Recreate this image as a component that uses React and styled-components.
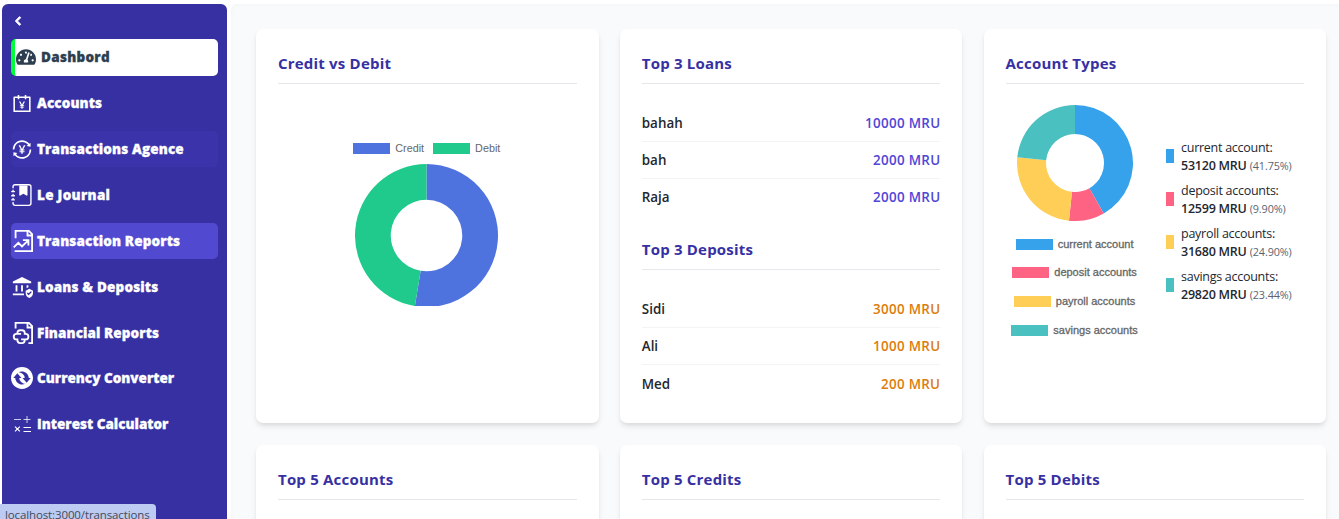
import React from "react";
import styled, { createGlobalStyle } from "styled-components";
import { FaTachometerAlt, FaChevronLeft } from "react-icons/fa";
import { AiOutlineAccountBook, AiOutlineTransaction } from "react-icons/ai";
import { BsJournalBookmarkFill } from "react-icons/bs";
import { GrDocumentPerformance, GrDocumentCloud } from "react-icons/gr";
import { SiConvertio } from "react-icons/si";

const GlobalStyle = createGlobalStyle`
  * { box-sizing: border-box; }
  body {
    margin: 0;
    height: 519px;
    overflow: hidden;
    background: #fff;
    color: #23272f;
    font-family: "Open Sans", "Noto Sans", sans-serif;
  }
`;

const Page = styled.div`
  display: flex;
  gap: 4px;
  height: 519px;
  padding: 4px 0 0 2px;
  overflow: hidden;
`;

const Sidebar = styled.aside`
  width: 225px;
  flex: none;
  padding: 12px 9px 0;
  border-radius: 6px 6px 0 0;
  background: #3730a3;
`;

const Collapse = styled.button`
  display: flex;
  align-items: center;
  height: 10px;
  margin: 0 0 13px;
  padding: 0 0 0 2px;
  border: 0;
  background: none;
  color: #fff;
  font-size: 10px;

  path { stroke: currentColor; stroke-width: 50px; }
`;

const Nav = styled.nav`
  display: flex;
  flex-direction: column;
  gap: 9.2px;
`;

const backgrounds = { active: "#fff", fading: "#3b33aa", hover: "#5249d1" };

const NavItem = styled.a`
  display: flex;
  align-items: center;
  gap: ${(p) => (p.$state === "active" ? 5 : 4)}px;
  height: 36.7px;
  padding-left: ${(p) => (p.$state === "active" ? 1 : 0)}px;
  border-left: ${(p) => (p.$state === "active" ? "4px solid #00ff38" : "0")};
  border-radius: 5px;
  background: ${(p) => backgrounds[p.$state] || "transparent"};
  color: ${(p) => (p.$state === "active" ? "#2c3e50" : "#fff")};
`;

const NavIcon = styled.span`
  display: flex;
  align-items: center;
  justify-content: center;
  flex: none;
  width: ${(p) => (p.$narrow ? 20 : 22)}px;
  font-size: ${(p) => p.$size}px;

  .gr path { stroke: currentColor; }
`;

const NavLabel = styled.span`
  font-size: 13.5px;
  font-weight: 800;
  line-height: 20px;
  letter-spacing: ${(p) => p.$spacing || 0}px;
  white-space: nowrap;
  -webkit-text-stroke: 0.3px currentColor;
`;

const Main = styled.main`
  flex: 1;
  min-width: 0;
  height: 600px;
  padding: 25px 13px 0 25px;
  border-radius: 6px 0 0 0;
  background: #f9fafc;
  box-shadow: inset 2px 2px 3px rgba(0, 0, 0, 0.015);
`;

const Grid = styled.div`
  display: grid;
  grid-template-columns: repeat(3, 342.6px);
  grid-template-rows: 394px 394px;
  gap: 22.4px 21.2px;
`;

const Card = styled.section`
  padding: 23px 22px 0;
  border-radius: 7px;
  background: #fff;
  box-shadow: 0 4px 6px -1px rgba(0, 0, 0, 0.1), 0 2px 4px -1px rgba(0, 0, 0, 0.06);
`;

const Title = styled.h2`
  height: 32px;
  margin: ${(p) => p.$top || 0}px 0 0;
  border-bottom: 1px solid #e5e7eb;
  color: #3730a3;
  font-size: 15px;
  font-weight: 700;
  line-height: 22px;
  letter-spacing: 0.2px;
`;

const List = styled.ul`
  margin: 21px 0 0;
  padding: 0;
  list-style: none;
`;

const Row = styled.li`
  display: flex;
  align-items: center;
  justify-content: space-between;
  height: 36.9px;
  border-bottom: 1px solid #f3f4f6;
  font-size: 13.4px;
  font-weight: 600;
  &:last-child { border-bottom: 0; }
`;

const Amount = styled.span`
  color: ${(p) => p.$color};
  letter-spacing: 0.3px;
`;

const CreditChart = styled.div`
  display: flex;
  flex-direction: column;
  align-items: center;
  padding: 59px 1px 0 0;
`;

const LegendLine = styled.div`
  display: flex;
  gap: 9px;
  height: 11px;
  margin-bottom: 10px;
`;

const LegendItem = styled.div`
  display: flex;
  align-items: center;
  gap: 5px;
  height: 11px;
  color: #666;
  font-family: "Liberation Sans", sans-serif;
  font-size: ${(p) => (p.$strong ? 11 : 10.8)}px;
  line-height: 11px;
  white-space: nowrap;
  -webkit-text-stroke: ${(p) => (p.$strong ? 0.3 : 0)}px #666;
`;

const Swatch = styled.span`
  width: 37px;
  height: 11px;
  flex: none;
  background: ${(p) => p.$color};
`;

const Chart = styled.svg`
  display: block;
  flex: none;
`;

const Types = styled.div`
  display: flex;
  padding: 21px 0 0 5.5px;
`;

const TypesChart = styled.div`
  display: flex;
  flex-direction: column;
  align-items: center;
  width: 127px;
`;

const TypesLegend = styled.div`
  display: flex;
  flex-direction: column;
  align-items: center;
  gap: 17.8px;
  margin-top: 17.5px;
`;

const Breakdown = styled.div`
  display: flex;
  flex-direction: column;
  gap: 7px;
  padding: 34px 0 0 28px;
`;

const BreakdownItem = styled.div`
  display: flex;
  align-items: center;
  gap: 7px;
  height: 36px;
  font-size: 12.5px;
  line-height: 18px;
  letter-spacing: -0.12px;
  white-space: nowrap;
`;

const Marker = styled.span`
  width: 8px;
  height: 14.5px;
  margin-bottom: 2px;
  background: ${(p) => p.$color};
`;

const Name = styled.div`
  letter-spacing: -0.27px;
`;

const Value = styled.strong`
  font-weight: 600;
  letter-spacing: -0.25px;
`;

const Percent = styled.small`
  color: #5c6472;
  font-size: 10.8px;
`;

const StatusBar = styled.div`
  position: fixed;
  left: 0;
  bottom: 0;
  width: 156px;
  height: 15px;
  padding-left: 5px;
  overflow: hidden;
  border-radius: 0 4px 0 0;
  background: #bdcbf3;
  color: #454a59;
  font-size: 11.5px;
  line-height: 21px;
  letter-spacing: -0.12px;
  white-space: nowrap;
`;

function SecuredBankIcon() {
  return (
    <svg width="1em" height="1em" viewBox="0 0 24 24" fill="currentColor">
      <path d="M12 1 2 6v2h20V6zM5 10h2v7H5zM11 10h2v7h-2zM2 19v2h12.4c-.21-.64-.32-1.31-.36-2zM19 12.26V10h-2v3.26z" />
      <path fillRule="evenodd" d="M20 14l-4 2v2.55c0 2.52 1.71 4.88 4 5.45 2.29-.57 4-2.93 4-5.45V16zM19.28 21l-2.03-2.03 1.06-1.06.97.97 2.41-2.38 1.06 1.06z" />
    </svg>
  );
}

function OperationsIcon() {
  return (
    <svg width="1em" height="1em" viewBox="0 0 22 22" fill="none" stroke="currentColor">
      <path strokeOpacity="0.75" d="M3 6.5h7M12.5 6.5h7M16 3v7" />
      <path strokeWidth="1.2" d="M4 13.6l4.8 4.8M8.8 13.6L4 18.4M12.5 14.5h7.5M12.5 18.5h7.5" />
    </svg>
  );
}

const navItems = [
  { label: "Dashbord", icon: FaTachometerAlt, size: 20, state: "active", spacing: 0.28 },
  { label: "Accounts", icon: AiOutlineAccountBook, size: 23, spacing: 0.12 },
  { label: "Transactions Agence", icon: AiOutlineTransaction, size: 23, state: "fading", spacing: 0.14 },
  { label: "Le Journal", icon: BsJournalBookmarkFill, size: 22, spacing: 0.3 },
  { label: "Transaction Reports", icon: GrDocumentPerformance, size: 22, state: "hover", spacing: 0.14 },
  { label: "Loans & Deposits", icon: SecuredBankIcon, size: 22, spacing: 0.16 },
  { label: "Financial Reports", icon: GrDocumentCloud, size: 22, spacing: 0.1 },
  { label: "Currency Converter", icon: SiConvertio, size: 22 },
  { label: "Interest Calculator", icon: OperationsIcon, size: 22 },
];

const loans = [["bahah", "10000 MRU"], ["bah", "2000 MRU"], ["Raja", "2000 MRU"]];
const deposits = [["Sidi", "3000 MRU"], ["Ali", "1000 MRU"], ["Med", "200 MRU"]];

const flows = [
  { name: "Credit", share: 52.6, color: "#4e73df" },
  { name: "Debit", share: 47.4, color: "#1fca8c" },
];

const accountTypes = [
  { name: "current account", amount: "53120 MRU", percent: "41.75", color: "#36a2eb" },
  { name: "deposit accounts", amount: "12599 MRU", percent: "9.90", color: "#ff6384" },
  { name: "payroll accounts", amount: "31680 MRU", percent: "24.90", color: "#ffce56" },
  { name: "savings accounts", amount: "29820 MRU", percent: "23.44", color: "#4bc0c0" },
];

function Doughnut({ radius, height, slices }) {
  const size = radius * 2;
  const inner = radius / 2;
  const total = slices.reduce((sum, s) => sum + s.value, 0);
  let start = 0;
  const point = (r, t) => {
    const a = t * 2 * Math.PI;
    return `${radius + r * Math.sin(a)} ${radius - r * Math.cos(a)}`;
  };
  return (
    <Chart width={size} height={height || size} viewBox={`0 0 ${size} ${height || size}`}>
      {slices.map((s) => {
        const from = start;
        const to = start + s.value / total;
        start = to;
        const large = to - from > 0.5 ? 1 : 0;
        return (
          <path
            key={s.color}
            fill={s.color}
            d={`M${point(radius, from)}A${radius} ${radius} 0 ${large} 1 ${point(radius, to)}L${point(inner, to)}A${inner} ${inner} 0 ${large} 0 ${point(inner, from)}Z`}
          />
        );
      })}
    </Chart>
  );
}

function Ranking({ rows, color }) {
  return (
    <List>
      {rows.map(([name, amount]) => (
        <Row key={name}>
          <span>{name}</span>
          <Amount $color={color}>{amount}</Amount>
        </Row>
      ))}
    </List>
  );
}

export default function App() {
  return (
    <>
      <GlobalStyle />
      <Page>
        <Sidebar>
          <Collapse aria-label="Collapse"><FaChevronLeft /></Collapse>
          <Nav>
            {navItems.map(({ label, icon: Icon, size, state, spacing }) => (
              <NavItem key={label} $state={state}>
                <NavIcon $size={size} $narrow={state === "active"}>
                  <Icon className={label.endsWith("Reports") ? "gr" : undefined} />
                </NavIcon>
                <NavLabel $spacing={spacing}>{label}</NavLabel>
              </NavItem>
            ))}
          </Nav>
        </Sidebar>
        <Main>
          <Grid>
            <Card>
              <Title>Credit vs Debit</Title>
              <CreditChart>
                <LegendLine>
                  {flows.map((f) => (
                    <LegendItem key={f.name}><Swatch $color={f.color} />{f.name}</LegendItem>
                  ))}
                </LegendLine>
                <Doughnut radius={71.5} height={142} slices={flows.map((f) => ({ value: f.share, color: f.color }))} />
              </CreditChart>
            </Card>
            <Card>
              <Title>Top 3 Loans</Title>
              <Ranking rows={loans} color="#4f46d5" />
              <Title $top={22.8}>Top 3 Deposits</Title>
              <Ranking rows={deposits} color="#dc7c0c" />
            </Card>
            <Card>
              <Title>Account Types</Title>
              <Types>
                <TypesChart>
                  <Doughnut radius={58} slices={accountTypes.map((t) => ({ value: Number(t.percent), color: t.color }))} />
                  <TypesLegend>
                    {accountTypes.map((t) => (
                      <LegendItem key={t.name} $strong><Swatch $color={t.color} />{t.name}</LegendItem>
                    ))}
                  </TypesLegend>
                </TypesChart>
                <Breakdown>
                  {accountTypes.map((t) => (
                    <BreakdownItem key={t.name}>
                      <Marker $color={t.color} />
                      <div>
                        <Name>{t.name}:</Name>
                        <Value>{t.amount}</Value> <Percent>({t.percent}%)</Percent>
                      </div>
                    </BreakdownItem>
                  ))}
                </Breakdown>
              </Types>
            </Card>
            <Card><Title>Top 5 Accounts</Title></Card>
            <Card><Title>Top 5 Credits</Title></Card>
            <Card><Title>Top 5 Debits</Title></Card>
          </Grid>
        </Main>
      </Page>
      <StatusBar>localhost:3000/transactions</StatusBar>
    </>
  );
}
